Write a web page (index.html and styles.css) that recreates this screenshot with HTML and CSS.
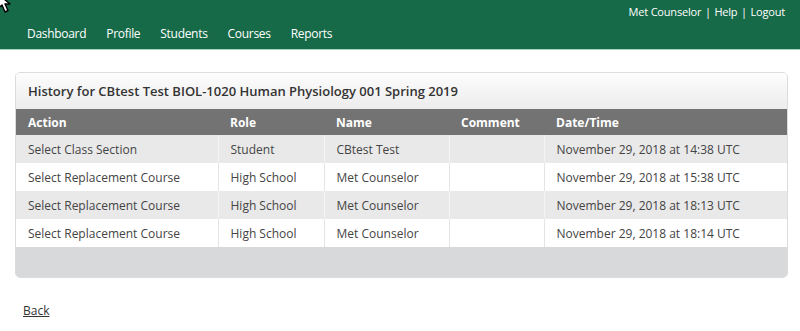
FILE: index.html
```html
<!DOCTYPE html>
<html lang="en">
<head>
    <meta charset="UTF-8">
    <title>Enrollment History</title>
    <link rel="stylesheet" href="styles.css">
</head>
<body>
    <svg class="cursor" width="16" height="18" viewBox="0 0 16 18">
        <path d="M-2 -6 L-2 8 L2 5 L5 12 L8 10.5 L5 4 L10 4 Z" fill="#fff" stroke="#000" stroke-width="1.4" stroke-linejoin="round"/>
    </svg>
    <header class="topbar">
        <div class="user-links">
            <a href="#">Met Counselor</a> <span class="sep">|</span> <a href="#">Help</a> <span class="sep">|</span> <a href="#">Logout</a>
        </div>
        <nav class="main-nav">
            <a href="#">Dashboard</a>
            <a href="#">Profile</a>
            <a href="#">Students</a>
            <a href="#">Courses</a>
            <a href="#">Reports</a>
        </nav>
    </header>

    <main class="content">
        <div class="panel">
            <div class="panel-title">History for CBtest Test BIOL-1020 Human Physiology 001 Spring 2019</div>
            <table class="history">
                <thead>
                    <tr>
                        <th class="col-action">Action</th>
                        <th class="col-role">Role</th>
                        <th class="col-name">Name</th>
                        <th class="col-comment">Comment</th>
                        <th>Date/Time</th>
                    </tr>
                </thead>
                <tbody>
                    <tr>
                        <td>Select Class Section</td>
                        <td>Student</td>
                        <td>CBtest Test</td>
                        <td></td>
                        <td>November 29, 2018 at 14:38 UTC</td>
                    </tr>
                    <tr>
                        <td>Select Replacement Course</td>
                        <td>High School</td>
                        <td>Met Counselor</td>
                        <td></td>
                        <td>November 29, 2018 at 15:38 UTC</td>
                    </tr>
                    <tr>
                        <td>Select Replacement Course</td>
                        <td>High School</td>
                        <td>Met Counselor</td>
                        <td></td>
                        <td>November 29, 2018 at 18:13 UTC</td>
                    </tr>
                    <tr>
                        <td>Select Replacement Course</td>
                        <td>High School</td>
                        <td>Met Counselor</td>
                        <td></td>
                        <td>November 29, 2018 at 18:14 UTC</td>
                    </tr>
                </tbody>
            </table>
            <div class="panel-footer"></div>
        </div>

        <a class="back-link" href="#">Back</a>
    </main>
</body>
</html>
```

FILE: styles.css
```css
body {
    margin: 0;
    font-family: 'Open Sans', Arial, sans-serif;
    font-size: 12px;
    color: #333;
    background: #fff;
}
.cursor {
    position: absolute;
    left: 0;
    top: 0;
}
.topbar {
    background: #176a48;
    height: 50px;
    border-bottom: 1px solid #a9d3c1;
    box-sizing: border-box;
    padding: 0 15px 0 27px;
}
.user-links {
    text-align: right;
    color: #fff;
    font-size: 11px;
    letter-spacing: -0.2px;
    padding-top: 4px;
    height: 17px;
}
.user-links a {
    color: #fff;
    text-decoration: none;
}
.user-links .sep {
    padding: 0 1px;
}
.main-nav {
    display: flex;
    gap: 20px;
    padding-top: 4px;
}
.main-nav a {
    color: #fff;
    text-decoration: none;
    font-size: 12px;
    letter-spacing: -0.3px;
}
.content {
    padding: 22px 12px 0 15px;
}
.panel {
    border: 1px solid #dcdcdc;
    border-radius: 5px;
    overflow: hidden;
}
.panel-title {
    height: 36px;
    line-height: 36px;
    padding-left: 12px;
    font-size: 13px;
    font-weight: 600;
    color: #333;
    background: linear-gradient(#fdfdfd, #ececec);
}
.history {
    width: 100%;
    border-collapse: collapse;
}
.history th {
    background: #737373;
    color: #fff;
    text-align: left;
    font-weight: 700;
    height: 26px;
    padding: 0 12px;
}
.history td {
    height: 28px;
    padding: 0 12px;
    border-left: 1px solid #e4e4e4;
    color: #444;
}
.history td:first-child {
    border-left: none;
}
.history tbody tr:nth-child(odd) td {
    background: #e9e9e9;
    border-left-color: #f4f4f4;
}
.history tbody tr:nth-child(odd) td:first-child {
    border-left: none;
}
.col-action {
    width: 178px;
}
.col-role {
    width: 82px;
}
.col-name {
    width: 101px;
}
.col-comment {
    width: 71px;
}
.panel-footer {
    height: 30px;
    background: #d8d9da;
}
.back-link {
    display: inline-block;
    margin: 24px 0 0 8px;
    color: #333;
}
```
